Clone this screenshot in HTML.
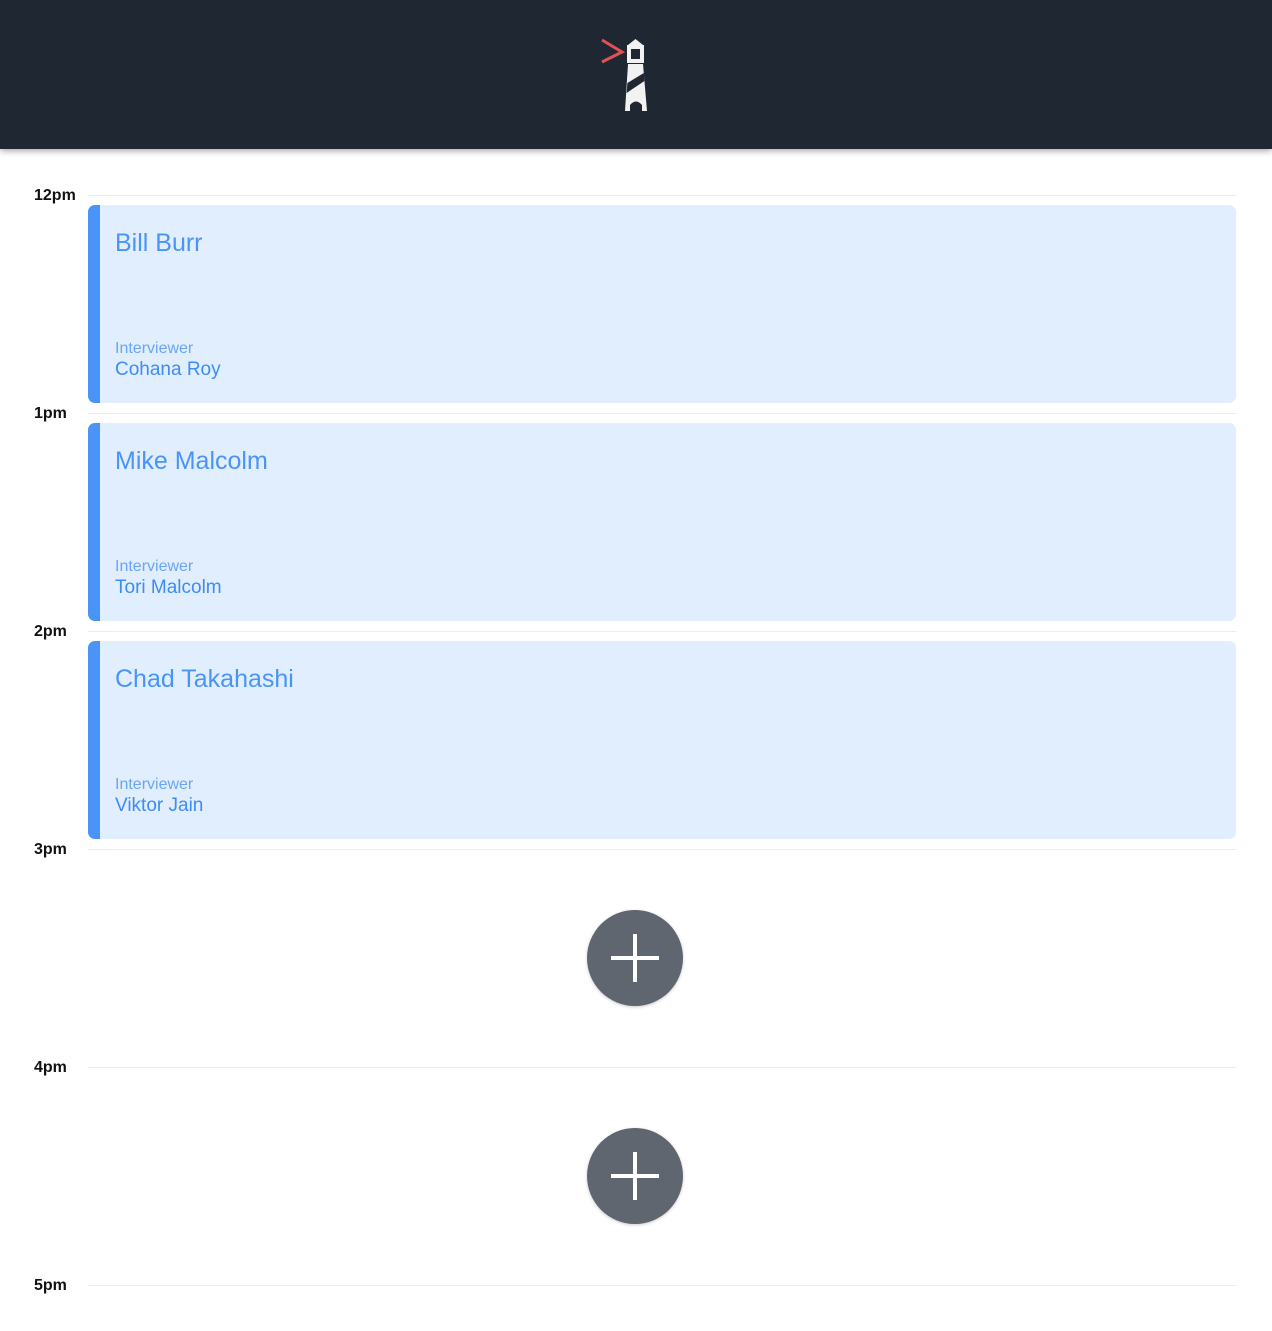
<!DOCTYPE html>
<html><head><meta charset="utf-8"><style>
html,body{margin:0;padding:0;width:1272px;height:1331px;background:#fff;overflow:hidden;font-family:"Liberation Sans",sans-serif}
.hdr{position:absolute;left:0;top:0;width:1272px;height:149px;background:#1f2733;box-shadow:0 2px 6px rgba(0,0,0,.35)}
.lbl{position:absolute;left:34px;font-weight:bold;font-size:16px;color:#111;line-height:20px}
.line{position:absolute;left:88px;width:1148px;height:1px;background:#ececec}
.card{position:absolute;left:88px;width:1148px;height:198px;background:#e1eefe;border-radius:7px;overflow:hidden}
.card:before{content:"";position:absolute;left:0;top:0;bottom:0;width:12px;background:#4a94f8}
.nm{position:absolute;left:27px;top:24px;font-size:25px;color:#4a94f8}
.iv{position:absolute;left:27px;top:135px;font-size:16px;color:#6aa6f8}
.in{position:absolute;left:27px;top:154px;font-size:19px;color:#3d8cf5}
.plus{position:absolute;left:587px;width:96px;height:96px;border-radius:50%;background:#5f6670;box-shadow:0 1px 3px rgba(0,0,0,.2)}
.plus:before{content:"";position:absolute;left:24px;top:46px;width:48px;height:4px;background:#fff}
.plus:after{content:"";position:absolute;left:46px;top:24px;width:4px;height:48px;background:#fff}
</style></head><body>
<div class="hdr">
<svg style="position:absolute;left:595px;top:35px" width="60" height="80" viewBox="0 0 60 80">
<path d="M7 5 L27 17 L7 27" fill="none" stroke="#e05252" stroke-width="3"/>
<path d="M40.5 4 L33 10 L48 10 Z" fill="#f2f2f2"/>
<rect x="32" y="10" width="17" height="18" fill="#f2f2f2"/>
<rect x="36" y="14" width="9" height="10" fill="#1f2733"/>
<path d="M33 29 L48 29 L52 76 L30 76 Z" fill="#f2f2f2"/>
<path d="M32.4 48 L48.8 38 L49.4 46 L31.6 58 Z" fill="#1f2733"/>
<path d="M35 76 L35 70 Q41 63 47 70 L47 76 Z" fill="#1f2733"/>
</svg>
</div>

<div class="lbl" style="top:186px">12pm</div><div class="line" style="top:195px"></div>
<div class="lbl" style="top:404px">1pm</div><div class="line" style="top:413px"></div>
<div class="lbl" style="top:622px">2pm</div><div class="line" style="top:631px"></div>
<div class="lbl" style="top:840px">3pm</div><div class="line" style="top:849px"></div>
<div class="lbl" style="top:1058px">4pm</div><div class="line" style="top:1067px"></div>
<div class="lbl" style="top:1276px">5pm</div><div class="line" style="top:1285px"></div>

<div class="card" style="top:205px"><div class="nm">Bill Burr</div><div class="iv">Interviewer</div><div class="in">Cohana Roy</div></div>
<div class="card" style="top:423px"><div class="nm">Mike Malcolm</div><div class="iv">Interviewer</div><div class="in">Tori Malcolm</div></div>
<div class="card" style="top:641px"><div class="nm">Chad Takahashi</div><div class="iv">Interviewer</div><div class="in">Viktor Jain</div></div>

<div class="plus" style="top:910px"></div>
<div class="plus" style="top:1128px"></div>
</body></html>
